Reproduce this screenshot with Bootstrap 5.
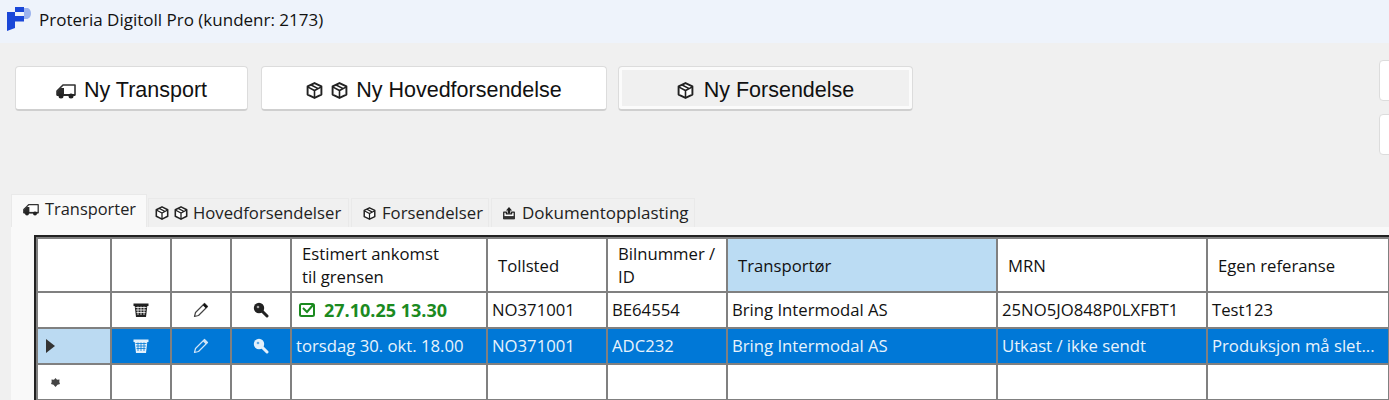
<!DOCTYPE html>
<html lang="no">
<head>
    <meta charset="UTF-8">
    <title>Proteria Digitoll Pro</title>
    <link href="https://cdn.jsdelivr.net/npm/bootstrap@5.3.3/dist/css/bootstrap.min.css" rel="stylesheet">
    <style>
    html, body { height: 400px; overflow: hidden; }
    body { background: #f0f0f0; color: #111; font-family: "Open Sans", "Noto Sans", sans-serif; }
    .title-bar { height: 43px; background: #eef3fb; padding: 0 0 3px 7px; gap: 8px; font-size: 17px; }
    .title-logo { margin-bottom: 2px; }
    .tool-area { height: 151px; padding: 23px 0 0 15px; }
    .tool-btn {
        height: 45px; background: #fff; color: #111; border: 1px solid #dcdcdc; border-bottom: 2px solid #cfcfcf;
        border-radius: 4px; font: 21.5px "Liberation Sans", sans-serif; gap: 8px; padding: 5px 0 0;
    }
    .tool-btn:hover { background: #fff; color: #111; border-color: #dcdcdc; }
    .btn-transport { width: 233px; }
    .btn-hoved { width: 346px; margin-left: 13px; }
    .btn-forsendelse { width: 295px; margin-left: 11px; background: #f0f0f0; box-shadow: inset 0 0 0 3px #fbfbfb; gap: 10px; }
    .btn-forsendelse:hover { background: #f0f0f0; }
    .side-btns { margin-left: auto; margin-top: -6px; width: 10px; gap: 13px; }
    .side-btn { height: 41px; width: 40px; background: #fff; border: 1px solid #dcdcdc; border-radius: 4px; }
    .tab-strip { height: 33px; padding-left: 11px; gap: 1px; align-items: flex-end; }
    .tab-item { height: 29px; background: #f0f0f0; border: 1px solid #e9e9e9; border-bottom: 0; font-size: 16.7px; gap: 5px; padding: 0 0 0 6px; color: #222; white-space: nowrap; }
    .tab-item.is-on { height: 33px; background: #f9f9f9; padding-bottom: 3px; padding-left: 11px; font-size: 16.4px; gap: 6px; }
    .tab-1 { width: 136px; }
    .tab-2 { width: 201px; }
    .tab-3 { width: 138px; margin-left: 1px; padding-left: 11px; gap: 6px; }
    .tab-4 { width: 204px; margin-left: 1px; padding-left: 10px; gap: 6px; font-size: 17px; }
    .tab-body { background: #f9f9f9; margin-left: 11px; padding: 8px 0 0 23px; height: 174px; }
    .grid-wrap { border-top: 2px solid #222; border-left: 2px solid #222; width: 1355px; background: #fff; }
    .data-grid { table-layout: fixed; width: 1352px; border-collapse: collapse; font-size: 16.7px; margin: 0; }
    .data-grid th, .data-grid td { border: 2px solid #808080; padding: 0 4px; white-space: nowrap; overflow: hidden; font-weight: 400; vertical-align: middle; background: #fff; color: #111; }
    .data-grid thead tr > * { height: 54px; line-height: 23px; padding-left: 10px; white-space: normal; }
    .data-grid tbody tr { height: 36px; }
    .data-grid .head-on { background: #bbdcf3; }
    .data-grid .row-on td { background: #0078d7; color: #e8f3fc; }
    .data-grid .row-on td.row-mark { background: #bbdaf2; }
    .data-grid td.ico-cell { text-align: center; padding: 0; }
    .data-grid td.row-mark { padding: 0 0 0 8px; }
    .data-grid td.row-new { padding-left: 13px; }
    .date-ok { color: #1b8a1f; font-weight: 700; font-size: 18px; gap: 9px; padding-left: 3px; }
    .ico { display: block; flex: none; }
    </style>
</head>
<body>

<svg width="0" height="0" class="d-block">
  <defs>
    <symbol id="ic-box" viewBox="0 0 16 16">
      <path d="M8 1 14.500 4.200V11.800L8 15 1.500 11.800V4.200Z" fill="#fff" stroke="#222" stroke-width="1.800" stroke-linejoin="round"/>
      <path d="M1.500 4.600 8 8 14.500 4.600M8 8V15M4.800 2.800 11 6" fill="none" stroke="#222" stroke-width="1.500"/>
    </symbol>
    <symbol id="ic-truck" viewBox="0 0 20 16">
      <path d="M7 2H19V12H1V8L4 5Z" fill="#fff" stroke="#333" stroke-width="1.600" stroke-linejoin="round"/>
      <path d="M1 8.500 4.500 5H8V12H1Z" fill="#2b2b2b"/>
      <path d="M1 11H19V13H1Z" fill="#2b2b2b"/>
      <circle cx="5" cy="13" r="2.500" fill="#222"/>
      <circle cx="15" cy="13" r="2.500" fill="#222"/>
    </symbol>
    <symbol id="ic-upload" viewBox="0 0 16 16">
      <path d="M2 7H5V9H11V7H14V14.500H2Z" fill="#fff" stroke="#222" stroke-width="1.500" stroke-linejoin="round"/>
      <path d="M2 11.500H14V15H2Z" fill="#333"/>
      <path d="M8 1 11.500 5H9.500V8.500H6.500V5H4.500Z" fill="#222"/>
    </symbol>
    <symbol id="ic-trash" viewBox="0 0 16 16">
      <path d="M.5 1.500H15.500V4H14.300L13 15H3L1.700 4H.5Z" fill="currentColor"/>
      <path d="M2.500 5.500H13.500M3 8H13M3.500 10.500H12.500M5 4.500V13M8 4.500V13M11 4.500V13" stroke="var(--ic-bg)" stroke-width=".8" fill="none"/>
    </symbol>
    <symbol id="ic-pencil" viewBox="0 0 16 16">
      <path d="M1.500 14.500 2.500 10.500 11.500 1.500 14.500 4.500 5.500 13.500Z" fill="var(--ic-bg)" stroke="var(--ic-line)" stroke-width="1.200" stroke-linejoin="round"/>
      <path d="M11.500 1.500 14.500 4.500 12.800 6.200 9.800 3.200Z" fill="var(--ic-tip)"/>
    </symbol>
    <symbol id="ic-search" viewBox="0 0 16 16">
      <circle cx="6" cy="6" r="5.200" fill="currentColor"/>
      <path d="M9 9 14 14" stroke="currentColor" stroke-width="3" stroke-linecap="round"/>
      <circle cx="5" cy="5" r="1.300" fill="var(--ic-bg)" opacity=".6"/>
    </symbol>
  </defs>
</svg>

<div class="title-bar d-flex align-items-center">
  <svg class="ico title-logo" width="24" height="24" viewBox="0 0 24 24">
    <path d="M17 1H20C22.500 1 24 3.500 24 6.500S22 12 19.500 12H17Z" fill="#9db4ee"/>
    <path d="M8 0H17V5H8ZM0 9H17V14.500H8V21L0 24Z" fill="#1a47d8"/>
    <path d="M0 5H8V9H0Z" fill="#1a47d8"/>
  </svg>
  <span>Proteria Digitoll Pro (kundenr: 2173)</span>
</div>

<div class="tool-area d-flex align-items-start">
  <button class="btn tool-btn btn-transport d-flex align-items-center justify-content-center">
    <svg class="ico" width="20" height="16"><use href="#ic-truck"/></svg>Ny Transport
  </button>
  <button class="btn tool-btn btn-hoved d-flex align-items-center justify-content-center">
    <svg class="ico" width="17" height="17"><use href="#ic-box"/></svg>
    <svg class="ico" width="17" height="17"><use href="#ic-box"/></svg>Ny Hovedforsendelse
  </button>
  <button class="btn tool-btn btn-forsendelse d-flex align-items-center justify-content-center">
    <svg class="ico" width="17" height="17"><use href="#ic-box"/></svg>Ny Forsendelse
  </button>
  <div class="side-btns d-flex flex-column">
    <div class="side-btn"></div>
    <div class="side-btn"></div>
  </div>
</div>

<div class="tab-strip d-flex">
  <div class="tab-item tab-1 is-on d-flex align-items-center"><svg class="ico" width="16" height="13"><use href="#ic-truck"/></svg>Transporter</div>
  <div class="tab-item tab-2 d-flex align-items-center"><svg class="ico" width="14" height="14"><use href="#ic-box"/></svg><svg class="ico" width="14" height="14"><use href="#ic-box"/></svg>Hovedforsendelser</div>
  <div class="tab-item tab-3 d-flex align-items-center"><svg class="ico" width="13" height="13"><use href="#ic-box"/></svg>Forsendelser</div>
  <div class="tab-item tab-4 d-flex align-items-center"><svg class="ico" width="14" height="14"><use href="#ic-upload"/></svg>Dokumentopplasting</div>
</div>

<div class="tab-body">
  <div class="grid-wrap">
    <table class="data-grid">
      <colgroup>
        <col id="c0"><col id="c1"><col id="c2"><col id="c3"><col id="c4"><col id="c5"><col id="c6"><col id="c7"><col id="c8"><col id="c9">
      </colgroup>
      <thead>
        <tr>
          <th></th><th></th><th></th><th></th>
          <th>Estimert ankomst<br>til grensen</th>
          <th>Tollsted</th>
          <th>Bilnummer / ID</th>
          <th class="head-on">Transportør</th>
          <th>MRN</th>
          <th>Egen referanse</th>
        </tr>
      </thead>
      <tbody id="gridBody"></tbody>
    </table>
  </div>
</div>

<script>
// kolonnebredder fra skjermbildet
const colWidths = [74, 60, 60, 60, 196, 120, 120, 270, 210, 182];
colWidths.forEach((w, i) => { document.getElementById('c' + i).style.width = w + 'px'; });

const icons = (bg, line, tip, col) => ['trash', 'pencil', 'search'].map(n =>
    `<td class="ico-cell"><svg class="ico mx-auto" width="16" height="16" style="color:${col};--ic-bg:${bg};--ic-line:${line};--ic-tip:${tip}"><use href="#ic-${n}"/></svg></td>`
).join('');

document.getElementById('gridBody').innerHTML = `
  <tr>
    <td></td>${icons('#fff', '#444', '#111', '#222')}
    <td><div class="date-ok d-flex align-items-center"><svg class="ico" width="16" height="16" viewBox="0 0 16 16"><rect x="1" y="2" width="14" height="12" rx="1.500" fill="none" stroke="#1b8a1f" stroke-width="2"/><path d="M4 6 8 10 14 3" fill="none" stroke="#1b8a1f" stroke-width="2"/></svg>27.10.25 13.30</div></td>
    <td>NO371001</td><td>BE64554</td><td>Bring Intermodal AS</td><td>25NO5JO848P0LXFBT1</td><td>Test123</td>
  </tr>
  <tr class="row-on">
    <td class="row-mark"><svg class="ico" width="9" height="14" viewBox="0 0 9 14"><path d="M0 0 9 7 0 14Z" fill="#333"/></svg></td>${icons('#0078d7', '#cfe4f7', '#cfe4f7', '#e3f0fb')}
    <td>torsdag 30. okt. 18.00</td><td>NO371001</td><td>ADC232</td><td>Bring Intermodal AS</td><td>Utkast / ikke sendt</td><td>Produksjon må slet...</td>
  </tr>
  <tr>
    <td class="row-mark row-new"><svg class="ico" width="9" height="9" viewBox="0 0 9 9"><path d="M4.500 0 6 1.800 8.500 1.500 8.300 4 9 6 6.500 6.800 4.500 9 2.500 6.800 0 6 .7 4 .5 1.500 3 1.800Z" fill="#444"/></svg></td><td></td><td></td><td></td><td></td><td></td><td></td><td></td><td></td><td></td>
  </tr>`;
</script>
<script src="https://cdn.jsdelivr.net/npm/bootstrap@5.3.3/dist/js/bootstrap.bundle.min.js"></script>
</body>
</html>
